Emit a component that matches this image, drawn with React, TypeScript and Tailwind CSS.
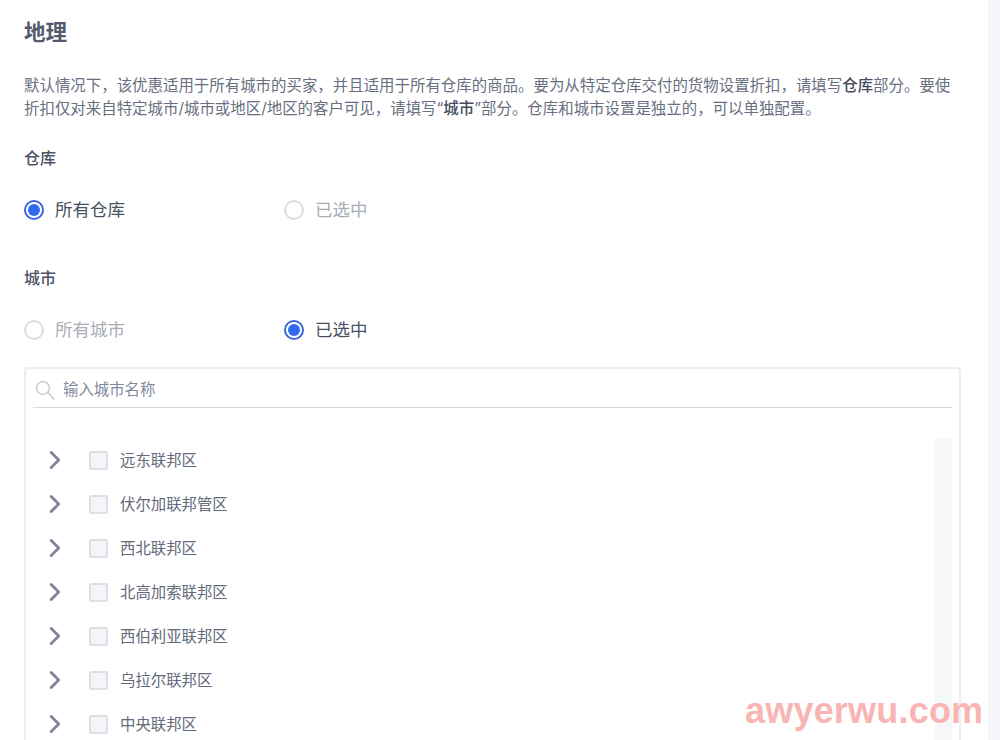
import React from "react";
import { ChevronRight } from "lucide-react";

const font = { fontFamily: '"Inter", "Noto Sans CJK SC", sans-serif' };
const regions = ["远东联邦区", "伏尔加联邦管区", "西北联邦区", "北高加索联邦区", "西伯利亚联邦区", "乌拉尔联邦区", "中央联邦区"];

function Radio({ label, checked }: { label: string; checked?: boolean }) {
  return (
    <div className="flex w-[260px] items-center gap-[11px]">
      {checked ? (
        <span className="flex h-[20px] w-[20px] items-center justify-center rounded-full border-[2px] border-[#3a67e0] bg-white">
          <span className="h-[12px] w-[12px] rounded-full bg-[#3369f0]" />
        </span>
      ) : (
        <span className="h-[20px] w-[20px] rounded-full border-[2px] border-[#dcdde0] bg-white" />
      )}
      <span className={`text-[17.5px] leading-[24px] ${checked ? "text-[#4a5162]" : "text-[#a9adb5]"}`}>{label}</span>
    </div>
  );
}

export default function App() {
  return (
    <div style={font} className="relative flex h-[740px] w-[1000px] overflow-hidden bg-white">
      <main className="w-[988px] pl-[24px] pr-[24px] pt-[17px]">
        <h1 className="text-[21.5px] font-semibold leading-[30px] text-[#545b6e]">地理</h1>
        <p className="mt-[27px] w-[932px] text-[15.44px] leading-[23px] text-[#696f7f]">
          默认情况下，该优惠适用于所有城市的买家，并且适用于所有仓库的商品。要为从特定仓库交付的货物设置折扣，请填写<b className="font-medium text-[#444b5c]">仓库</b>部分。要使折扣仅对来自特定城市/城市或地区/地区的客户可见，请填写“<b className="font-medium text-[#444b5c]">城市</b>”部分。仓库和城市设置是独立的，可以单独配置。
        </p>
        <h2 className="mt-[26px] text-[16px] font-medium leading-[24px] text-[#4c5366]">仓库</h2>
        <div className="mt-[28px] flex">
          <Radio label="所有仓库" checked />
          <Radio label="已选中" />
        </div>
        <h2 className="mt-[44px] text-[16px] font-medium leading-[24px] text-[#4c5366]">城市</h2>
        <div className="mt-[28px] flex">
          <Radio label="所有城市" />
          <Radio label="已选中" checked />
        </div>
        <section className="mt-[25px] h-[420px] w-[937px] rounded-[4px] border-2 border-[#eceef1] px-[7px] pt-[8px]">
          <div className="flex h-[31px] items-center gap-[8px] border-b border-[#d6d8dd] pb-[5px] pl-[2px]">
            <svg width="20" height="20" viewBox="0 0 20 20" fill="none" stroke="#c9cbd0" strokeWidth="1.5" strokeLinecap="round">
              <circle cx="8" cy="8" r="6.4" />
              <path d="M12.8 12.8 L19 19" />
            </svg>
            <span className="text-[15.4px] text-[#83899a]">输入城市名称</span>
          </div>
          <div className="mt-[30px] flex">
            <ul className="flex-1 pl-[7px]">
              {regions.map((r) => (
                <li key={r} className="flex h-[44px] items-center">
                  <ChevronRight className="h-[30px] w-[30px] text-[#80879a]" strokeWidth={2.3} />
                  <span className="ml-[19px] h-[19px] w-[19px] rounded-[2px] border-2 border-[#dcdfe4] bg-[#f3f5f9]" />
                  <span className="ml-[12px] translate-y-[1px] text-[15.4px] text-[#636a7b]">{r}</span>
                </li>
              ))}
            </ul>
            <div className="h-[400px] w-[17px] bg-[#f6f7f8]" />
          </div>
        </section>
      </main>
      <aside className="w-[12px] bg-[#f5f6fa]" />
      <div className="absolute left-[745px] top-[689px] text-[36px] font-bold leading-[44px] tracking-[0.2px] text-[#f9b4b4]" style={{ fontFamily: '"Liberation Sans", sans-serif' }}>
        awyerwu.com
      </div>
    </div>
  );
}
